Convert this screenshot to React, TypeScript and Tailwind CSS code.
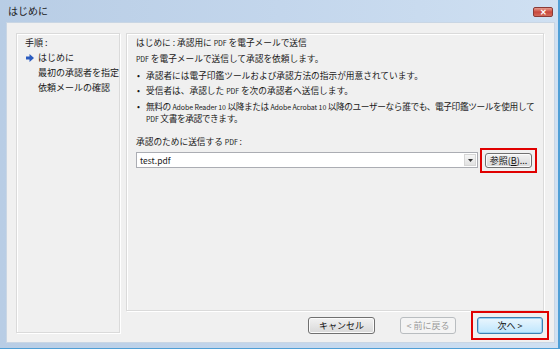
import React from "react";

const font = { fontFamily: '"Noto Sans CJK JP", "Noto Sans", sans-serif' };

function WinButton({
  label,
  disabled = false,
  focused = false,
  className = "",
}: {
  label: React.ReactNode;
  disabled?: boolean;
  focused?: boolean;
  className?: string;
}) {
  const base =
    "flex items-center justify-center rounded-[3px] border text-[9px] leading-none";
  const look = disabled
    ? "border-[#b9bdc0] bg-[#f4f4f4] text-[#9a9a9a]"
    : focused
      ? "border-[#3c7fb1] bg-gradient-to-b from-[#eaf6fd] to-[#bee6fd] text-[#111] shadow-[inset_0_0_0_1px_#9ad3f5]"
      : "border-[#707070] bg-gradient-to-b from-[#f2f2f2] to-[#d8d8d8] text-[#111] shadow-[inset_0_0_0_1px_#fbfbfb]";
  return <div className={`${base} ${look} ${className}`}>{label}</div>;
}

function Arrow() {
  return (
    <svg width="8" height="8" viewBox="0 0 8 8">
      <path d="M0 2.5h3.5V0L8 4 3.5 8V5.5H0z" fill="#2a5bbf" />
    </svg>
  );
}

// small latin text used inside japanese lines
function L({ children }: { children: React.ReactNode }) {
  return <span className="text-[7px] tracking-[-0.1px]">{children}</span>;
}

export default function App() {
  return (
    <div
      className="w-[560px] h-[349px] flex flex-col bg-gradient-to-r from-[#b8cde5] via-[#c3d6ec] to-[#cfe0f2] border-r-[2px] border-b-[1px] border-[#4f9fd6] text-[#1a1a1a]"
      style={font}
    >
      {/* title bar */}
      <div className="h-[22px] flex items-center justify-between pl-[8px] pr-[5px]">
        <span className="text-[10px] leading-none text-[#1b1b1b]">はじめに</span>
        <div className="w-[20px] h-[10px] mt-[2px] rounded-[2px] border border-[#8a3a36] bg-gradient-to-b from-[#e59a8e] via-[#c8463b] to-[#d2695a] flex items-center justify-center">
          <span className="text-white text-[8px] leading-none font-bold">✕</span>
        </div>
      </div>

      {/* client area */}
      <div className="flex-1 ml-[6px] mr-[3px] mb-[5px] bg-[#f0f0f0] border border-[#c9d6e4] flex gap-[6px] pt-[10px] pl-[9px]">
        {/* steps */}
        <div className="w-[104px] h-[300px] border border-[#dadada] shadow-[inset_1px_1px_0_#fff,1px_1px_0_#fff] pt-[1px] pl-[8px] text-[9px] leading-[15px]">
          <div>手順 :</div>
          <div className="flex items-center">
            <span className="w-[13px] flex items-center pl-[1px]">
              <Arrow />
            </span>
            <span>はじめに</span>
          </div>
          <div className="pl-[13px]">最初の承認者を指定</div>
          <div className="pl-[13px]">依頼メールの確認</div>
        </div>

        {/* main column */}
        <div className="w-[418px] flex flex-col">
          <div className="h-[278px] border border-[#dadada] shadow-[inset_1px_1px_0_#fff,1px_1px_0_#fff] pt-[1px] pl-[9px] pr-[6px] text-[8.7px]">
            <div className="leading-[15px]">
              はじめに : 承認用に <L>PDF</L> を電子メールで送信
            </div>
            <div className="leading-[15px]">
              <L>PDF</L> を電子メールで送信して承認を依頼します。
            </div>
            <ul className="mt-[1px]">
              <li className="flex leading-[15px]">
                <span className="w-[10px] pl-[1px]">•</span>
                <span>承認者には電子印鑑ツールおよび承認方法の指示が用意されています。</span>
              </li>
              <li className="flex leading-[15px]">
                <span className="w-[10px] pl-[1px]">•</span>
                <span>
                  受信者は、承認した <L>PDF</L> を次の承認者へ送信します。
                </span>
              </li>
              <li className="flex leading-[11px] mt-[2px]">
                <span className="w-[10px] pl-[1px] shrink-0">•</span>
                <span className="whitespace-nowrap tracking-[-0.4px]">
                  無料の <L>Adobe Reader 10</L> 以降または <L>Adobe Acrobat 10</L>{" "}
                  以降のユーザーなら誰でも、電子印鑑ツールを使用して
                  <br />
                  <L>PDF</L> 文書を承認できます。
                </span>
              </li>
            </ul>
            <div className="mt-[9px] leading-[15px]">
              承認のために送信する <L>PDF</L> :
            </div>
            <div className="mt-[2px] flex items-center gap-[7px]">
              <div className="w-[342px] h-[16px] border border-[#abadb3] bg-white flex items-center justify-between pl-[3px] pr-[1px]">
                <span className="text-[8.5px] leading-none">test.pdf</span>
                <div className="w-[12px] h-[12px] flex items-center justify-center border border-[#d6d6d6] bg-gradient-to-b from-[#f5f5f5] to-[#e2e2e2]">
                  <svg width="5" height="3" viewBox="0 0 5 3">
                    <path d="M0 0h5L2.5 3z" fill="#333" />
                  </svg>
                </div>
              </div>
              <div className="relative">
                <WinButton
                  label={
                    <span>
                      参照(<span className="underline">B</span>)...
                    </span>
                  }
                  className="w-[47px] h-[15px]"
                />
                <div className="absolute -inset-[5px] border-2 border-[#e00000]" />
              </div>
            </div>
          </div>

          {/* buttons */}
          <div className="mt-[6px] flex justify-end pr-[1px]">
            <WinButton label="キャンセル" className="w-[67px] h-[17px]" />
            <WinButton label="< 前に戻る" disabled className="w-[56px] h-[17px] ml-[25px]" />
            <div className="relative ml-[21px]">
              <WinButton label="次へ >" focused className="w-[66px] h-[17px]" />
              <div className="absolute -inset-[6px] border-2 border-[#e00000]" />
            </div>
          </div>
        </div>
      </div>
    </div>
  );
}
